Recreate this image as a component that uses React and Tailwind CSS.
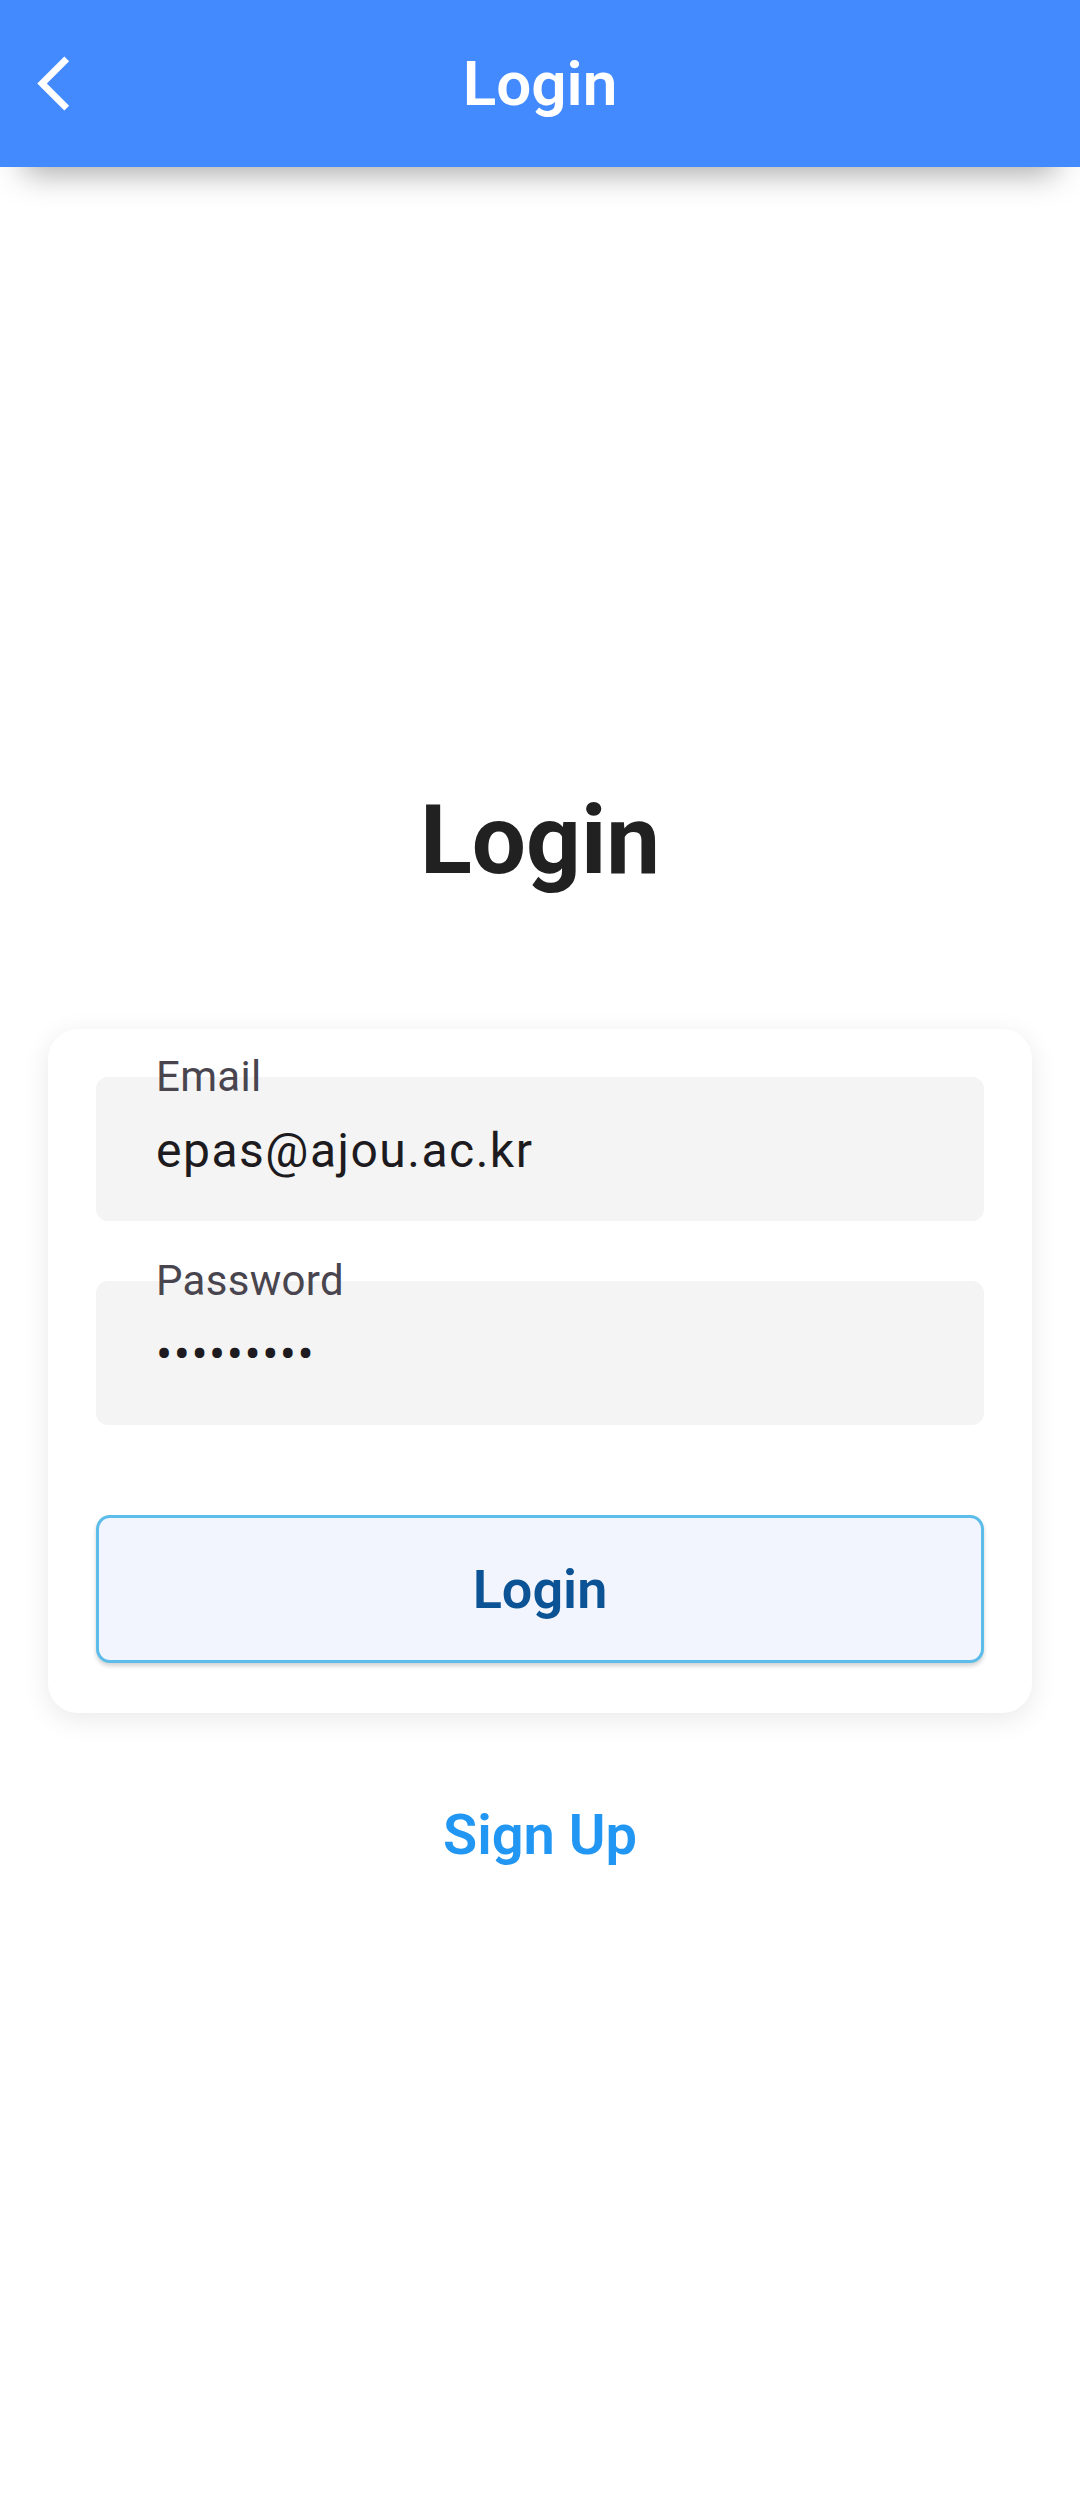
export default function App() {
  return (
    <div className="min-h-[2501px] bg-white font-['Roboto',sans-serif]">
      <header className="relative z-10 grid h-[167px] grid-cols-[1fr_auto_1fr] items-center bg-[#448aff] shadow-[0_30px_30px_-24px_rgba(0,0,0,0.35)]">
        <div className="flex items-center pl-[21px]">
          <svg width="65" height="65" viewBox="0 0 24 24" aria-hidden="true">
            <path d="M17.77 3.77L16 2 6 12l10 10 1.77-1.77L9.54 12z" fill="#ffffff" />
          </svg>
        </div>
        <h1 className="text-[62px] leading-[72px] font-semibold text-white">Login</h1>
        <div />
      </header>

      <main className="flex flex-col items-center">
        <h2 className="mt-[617px] text-[96px] leading-[112px] font-bold text-[#212121]">Login</h2>

        <div className="mt-[133px] w-[984px] rounded-[30px] bg-white px-[48px] pt-[48px] pb-[50px] shadow-[0_6px_28px_rgba(0,0,0,0.09)]">
          <div className="relative h-[144px] rounded-[12px] bg-[#f4f4f4]">
            <span className="absolute left-[60px] top-[-25px] text-[42px] leading-[49px] tracking-[0.3px] text-[#49454f]">
              Email
            </span>
            <div className="pl-[60px] pt-[46px] text-[48px] leading-[56px] tracking-[1.5px] text-[#1d1b20]">
              epas@ajou.ac.kr
            </div>
          </div>

          <div className="relative mt-[60px] h-[144px] rounded-[12px] bg-[#f4f4f4]">
            <span className="absolute left-[60px] top-[-25px] text-[42px] leading-[49px] tracking-[0.3px] text-[#49454f]">
              Password
            </span>
            <div className="pl-[60px] pt-[46px] text-[48px] leading-[56px] tracking-[1.5px] text-[#1d1b20]">
              •••••••••
            </div>
          </div>

          <button className="mt-[90px] flex h-[148px] w-full items-center justify-center rounded-[14px] border-[3px] border-[#5cbdea] bg-[#f3f5fe] shadow-[0_3px_4px_rgba(0,0,0,0.18)]">
            <span className="text-[54px] leading-[63px] font-semibold text-[#0b5394]">Login</span>
          </button>
        </div>

        <div className="mt-[90px] text-[56px] leading-[65px] font-semibold text-[#2196f3]">Sign Up</div>
      </main>
    </div>
  );
}
